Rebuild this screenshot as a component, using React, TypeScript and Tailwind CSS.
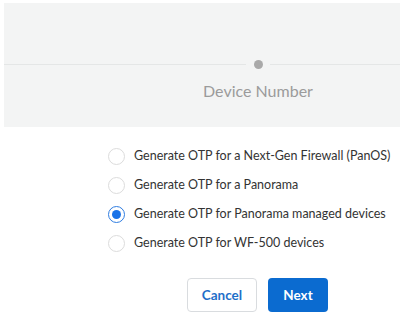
import React from "react";

const options = [
  "Generate OTP for a Next-Gen Firewall (PanOS)",
  "Generate OTP for a Panorama",
  "Generate OTP for Panorama managed devices",
  "Generate OTP for WF-500 devices",
];

export default function App() {
  return (
    <div className="w-[400px] h-[324px] bg-white overflow-hidden" style={{ fontFamily: "Lato, 'Open Sans', sans-serif" }}>
      <div className="mt-[3px] ml-[4px] h-[124px] bg-[#f3f4f4] flex flex-col">
        <div className="mt-[57px] h-[9px] flex items-center">
          <div className="w-[242px] h-px bg-[#e4e6e6]" />
          <div className="w-[24px] flex justify-center">
            <div className="w-[9px] h-[9px] rounded-full bg-[#a9a9a9]" />
          </div>
          <div className="flex-1 h-px bg-[#e4e6e6]" />
        </div>
        <div className="mt-[12px] flex">
          <div className="w-[194px]" />
          <div className="w-[120px] text-center text-[16px] leading-[20px] text-[#9b9b9b]">Device Number</div>
        </div>
      </div>
      <div className="mt-[20px] ml-[108px] flex flex-col gap-[11px]">
        {options.map((o, i) => (
          <div key={o} className="flex items-center h-[18px]">
            {i === 2 ? (
              <div className="w-[17px] h-[17px] rounded-full border-[1.5px] border-[#2f7de1] flex items-center justify-center">
                <div className="w-[9px] h-[9px] rounded-full bg-[#1a73e8]" />
              </div>
            ) : (
              <div className="w-[17px] h-[17px] rounded-full border border-[#dcdcdc] bg-white" />
            )}
            <span className="ml-[9px] text-[12.5px] text-[#333]">{o}</span>
          </div>
        ))}
      </div>
      <div className="mt-[26px] ml-[187px] flex gap-[11px]">
        <button className="w-[70px] h-[34px] rounded-[4px] border border-[#d9dcdf] bg-white text-[#1f6fc9] text-[13.5px] font-bold">Cancel</button>
        <button className="w-[60px] h-[34px] rounded-[4px] bg-[#0b6bd0] text-white text-[13.5px] font-bold">Next</button>
      </div>
    </div>
  );
}
